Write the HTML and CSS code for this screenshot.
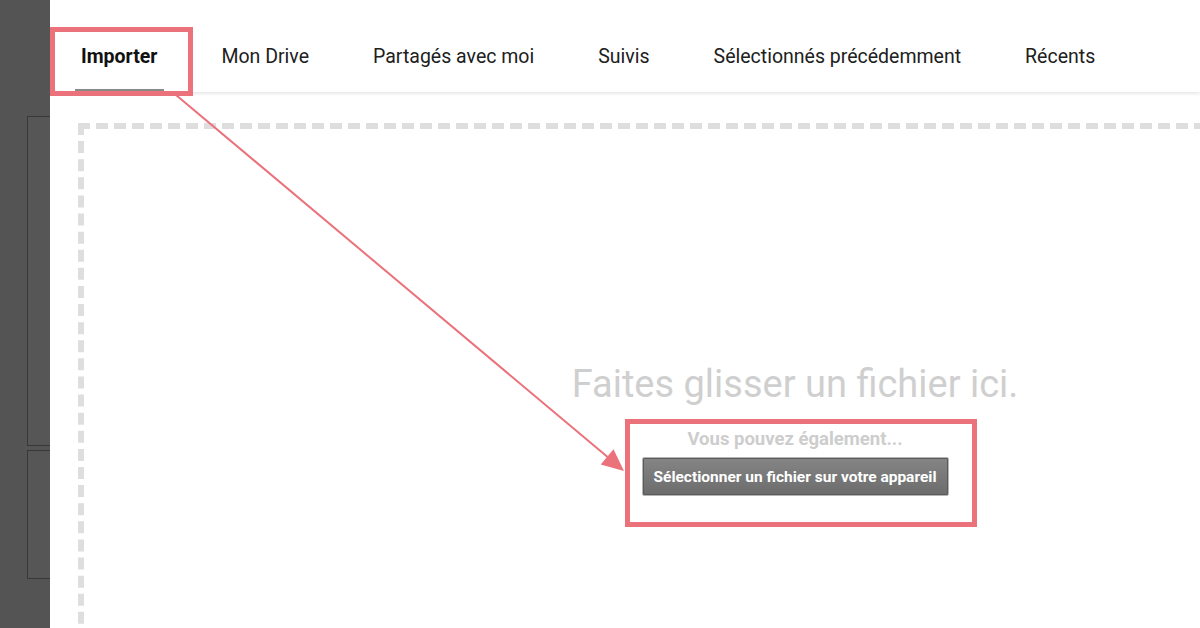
FILE: index.html
```html
<!DOCTYPE html>
<html lang="fr">
<head>
    <meta charset="UTF-8">
    <meta name="viewport" content="width=device-width, initial-scale=1.0">
    <title>Importer un fichier</title>
    <link rel="stylesheet" href="styles.css">
</head>
<body>
    <div class="sidebar">
        <div class="side-panel side-panel-top"></div>
        <div class="side-panel side-panel-bottom"></div>
    </div>
    <div class="main">
        <div class="tabs">
            <div class="tab active">Importer</div>
            <div class="tab">Mon Drive</div>
            <div class="tab">Partagés avec moi</div>
            <div class="tab">Suivis</div>
            <div class="tab">Sélectionnés précédemment</div>
            <div class="tab">Récents</div>
        </div>
        <div class="dropzone">
            <div class="drop-title">Faites glisser un fichier ici.</div>
            <div class="drop-sub">Vous pouvez également...</div>
            <button class="pick-btn">Sélectionner un fichier sur votre appareil</button>
        </div>
    </div>

    <svg class="annotations" width="1200" height="628" viewBox="0 0 1200 628">
        <rect x="52.5" y="29.5" width="138" height="64" fill="none" stroke="#eb727b" stroke-width="5"/>
        <rect x="627.5" y="421.5" width="347" height="103" fill="none" stroke="#eb727b" stroke-width="5"/>
        <line x1="176" y1="95" x2="610" y2="459" stroke="#eb727b" stroke-width="2"/>
        <polygon points="624,471 600.7,464.6 613.5,449.2" fill="#eb727b"/>
    </svg>
</body>
</html>
```

FILE: styles.css
```css
body {
    margin: 0;
    height: 628px;
    overflow: hidden;
    display: flex;
    background-color: #545454;
    font-family: 'Roboto', 'Liberation Sans', sans-serif;
}

.sidebar {
    width: 50px;
    flex-shrink: 0;
    overflow: hidden;
    padding-top: 116px;
    box-sizing: border-box;
}

.side-panel {
    margin-left: 27px;
    width: 60px;
    border: 1px solid #383838;
    background-color: #565656;
}

.side-panel-top {
    height: 328px;
}

.side-panel-bottom {
    height: 127px;
    margin-top: 4px;
}

.main {
    flex: 1;
    background-color: #fff;
    overflow: hidden;
}

.tabs {
    display: flex;
    height: 92px;
    padding-top: 20px;
    box-sizing: border-box;
    background-color: #fff;
    box-shadow: 0 2px 3px rgba(0, 0, 0, 0.09);
    position: relative;
    z-index: 1;
}

.tab {
    position: relative;
    display: flex;
    align-items: center;
    padding: 0 32px 0 31px;
    font-size: 19.5px;
    color: #202020;
    white-space: nowrap;
}

.tab + .tab {
    padding-left: 32px;
}

.tab.active {
    font-weight: bold;
    color: #111;
}

.tab.active:after {
    content: "";
    position: absolute;
    left: 25px;
    right: 25px;
    bottom: 0;
    height: 3px;
    background-color: #8a8a8a;
}

.dropzone {
    margin: 31px 0 0 28px;
    width: 1434px;
    height: 700px;
    border: 6px dashed #dedede;
    padding-top: 233px;
    box-sizing: border-box;
    display: flex;
    flex-direction: column;
    align-items: center;
}

.drop-title {
    font-size: 38px;
    color: #cfcfcf;
}

.drop-sub {
    margin-top: 22px;
    font-size: 18.5px;
    font-weight: bold;
    color: #cdcdcd;
}

.pick-btn {
    margin-top: 7px;
    height: 39px;
    width: 307px;
    padding: 0;
    font-family: inherit;
    font-size: 15.5px;
    font-weight: bold;
    color: #fff;
    border: 1px solid #b5b5b5;
    border-radius: 2px;
    box-shadow: inset 0 0 0 1px #5a5a5a;
    background: linear-gradient(#858585, #6c6c6c);
}

.annotations {
    position: absolute;
    top: 0;
    left: 0;
    z-index: 10;
    pointer-events: none;
}
```
